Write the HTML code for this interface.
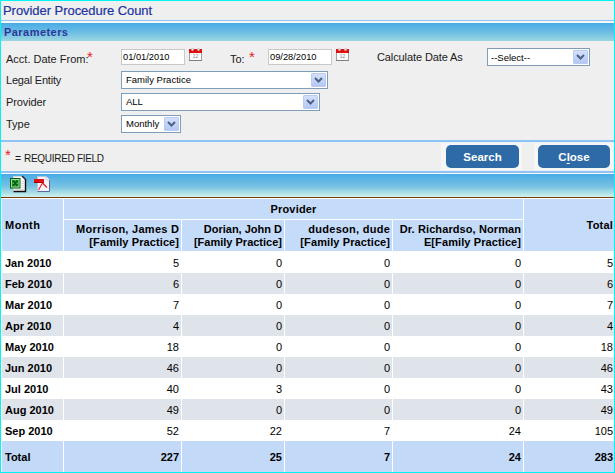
<!DOCTYPE html>
<html><head><meta charset="utf-8">
<style>
*{margin:0;padding:0;box-sizing:border-box}
html,body{width:615px;height:473px;overflow:hidden;background:#efefef;font-family:"Liberation Sans",sans-serif;color:#000}
.a{position:absolute}
.t{position:absolute;white-space:nowrap;line-height:1}
#frame{position:absolute;left:0;top:0;width:615px;height:473px;border:1px solid #00f4f4;z-index:50}
.grad{background:linear-gradient(#48ace6,#6cbde4 50%,#9ad6e0)}
.grad2{background:linear-gradient(#48ace6,#78c2e2 55%,#d0f3ea)}
.lbl{font-size:11px;color:#1a1a1a}
.inp{position:absolute;background:#fff;border:1px solid #c9c9c9}
.sel{position:absolute;background:#fff;border:1px solid #7f9db9}
.sel .btn{position:absolute;right:1px;top:1px;width:15px;height:14px;background:linear-gradient(#d4e0fb,#b4c8f4);border:1px solid #b9cbf0;border-radius:1px}
.sel .btn svg{position:absolute;left:2px;top:3px}
.itx{position:absolute;font-size:9px;line-height:1;color:#000;white-space:nowrap}
.cal{position:absolute;width:13px;height:13px}
.button{position:absolute;background:#2e6aa6;border-radius:5px;color:#fff;font-weight:bold;font-size:11.5px;text-align:center}
table{position:absolute;left:1px;top:198px;border-collapse:collapse;font-size:11px}
</style></head><body>
<div id="frame"></div>

<!-- title -->
<div class="t" style="left:3px;top:4px;font-size:13px;color:#1d34a0;-webkit-text-stroke:0.2px #1d34a0;letter-spacing:-0.05px">Provider Procedure Count</div>
<div class="a" style="left:0;top:20px;width:615px;height:1px;background:#8fc3f6"></div>
<div class="a" style="left:0;top:21px;width:615px;height:2px;background:#f6f8fa"></div>
<!-- params header -->
<div class="a grad" style="left:0;top:23px;width:615px;height:18px"></div>
<div class="t" style="left:4px;top:27px;font-size:11px;font-weight:bold;color:#2e3898;letter-spacing:0.45px">Parameters</div>

<!-- form -->
<div class="t lbl" style="left:6px;top:54px">Acct. Date From:</div>
<div class="t" style="left:87px;top:49px;font-size:15px;color:#e8201e">*</div>
<div class="inp" style="left:121px;top:49px;width:64px;height:16px"></div>
<div class="itx" style="left:123px;top:53px;font-size:9.3px">01/01/2010</div>
<svg class="cal" style="left:189px;top:48px" width="13" height="13" viewBox="0 0 13 13"><rect x="0.5" y="1.5" width="12" height="11" fill="#fafafa" stroke="#a0a0a0"/><rect x="0" y="12" width="13" height="1" fill="#808080"/><rect x="0" y="1" width="13" height="4" fill="#e40d0d"/><circle cx="3.5" cy="1.6" r="1.2" fill="#d8eef4" stroke="#a0a0a0" stroke-width="0.4"/><circle cx="9.5" cy="1.6" r="1.2" fill="#d8eef4" stroke="#a0a0a0" stroke-width="0.4"/><text x="6.5" y="10" font-size="5" text-anchor="middle" fill="#8a8a8a" font-family="Liberation Sans">12</text></svg>

<div class="t lbl" style="left:230px;top:54px">To:</div>
<div class="t" style="left:249px;top:49px;font-size:15px;color:#e8201e">*</div>
<div class="inp" style="left:268px;top:49px;width:64px;height:16px"></div>
<div class="itx" style="left:270px;top:53px;font-size:9.3px">09/28/2010</div>
<svg class="cal" style="left:336px;top:48px" width="13" height="13" viewBox="0 0 13 13"><rect x="0.5" y="1.5" width="12" height="11" fill="#fafafa" stroke="#a0a0a0"/><rect x="0" y="12" width="13" height="1" fill="#808080"/><rect x="0" y="1" width="13" height="4" fill="#e40d0d"/><circle cx="3.5" cy="1.6" r="1.2" fill="#d8eef4" stroke="#a0a0a0" stroke-width="0.4"/><circle cx="9.5" cy="1.6" r="1.2" fill="#d8eef4" stroke="#a0a0a0" stroke-width="0.4"/><text x="6.5" y="10" font-size="5" text-anchor="middle" fill="#8a8a8a" font-family="Liberation Sans">12</text></svg>

<div class="t lbl" style="left:377px;top:52px;letter-spacing:-0.1px">Calculate Date As</div>
<div class="sel" style="left:487px;top:48px;width:103px;height:18px"><div class="btn"><svg width="9" height="6" viewBox="0 0 9 6"><path d="M1 1 L4.5 4.5 L8 1" fill="none" stroke="#4d6185" stroke-width="2"/></svg></div></div>
<div class="itx" style="left:491px;top:53px;font-size:9.5px">--Select--</div>

<div class="t lbl" style="left:6px;top:75px;letter-spacing:-0.2px">Legal Entity</div>
<div class="sel" style="left:121px;top:71px;width:207px;height:18px"><div class="btn"><svg width="9" height="6" viewBox="0 0 9 6"><path d="M1 1 L4.5 4.5 L8 1" fill="none" stroke="#4d6185" stroke-width="2"/></svg></div></div>
<div class="itx" style="left:126px;top:75px;font-size:9.5px">Family Practice</div>

<div class="t lbl" style="left:6px;top:97px;letter-spacing:-0.1px">Provider</div>
<div class="sel" style="left:121px;top:93px;width:199px;height:18px"><div class="btn"><svg width="9" height="6" viewBox="0 0 9 6"><path d="M1 1 L4.5 4.5 L8 1" fill="none" stroke="#4d6185" stroke-width="2"/></svg></div></div>
<div class="itx" style="left:126px;top:97px;font-size:9.5px">ALL</div>

<div class="t lbl" style="left:6px;top:119px">Type</div>
<div class="sel" style="left:121px;top:115px;width:60px;height:18px"><div class="btn"><svg width="9" height="6" viewBox="0 0 9 6"><path d="M1 1 L4.5 4.5 L8 1" fill="none" stroke="#4d6185" stroke-width="2"/></svg></div></div>
<div class="itx" style="left:126px;top:119px;font-size:9.5px">Monthly</div>

<div class="a" style="left:0;top:140px;width:615px;height:2px;background:#8fc3f6"></div>
<!-- required row -->
<div class="t" style="left:5px;top:147px;font-size:15px;color:#e8201e">*</div>
<div class="t lbl" style="left:15px;top:153px;font-size:10.5px">=&nbsp;<span style="font-size:10px;letter-spacing:-0.3px">REQUIRED FIELD</span></div>
<div class="a" style="left:441px;top:143px;width:81px;height:27px;background:#f6f6f6"></div>
<div class="a" style="left:534px;top:143px;width:80px;height:27px;background:#f6f6f6"></div>
<div class="button" style="left:446px;top:145px;width:73px;height:23px;line-height:24px">Search</div>
<div class="button" style="left:538px;top:145px;width:72px;height:23px;line-height:24px">C<u style="text-underline-offset:1.5px">l</u>ose</div>
<div class="a" style="left:0;top:171px;width:615px;height:2px;background:#8fc3f6"></div>

<!-- toolbar -->
<div class="a" style="left:0;top:173px;width:615px;height:1px;background:#f4f8fb"></div>
<div class="a grad2" style="left:0;top:174px;width:615px;height:23px"></div>
<div class="a" style="left:0;top:197px;width:615px;height:1px;background:#7a3a10"></div>
<svg class="a" style="left:9px;top:175px" width="18" height="18" viewBox="0 0 18 18">
<path d="M4.5 1.5 H13.5 L16.5 4.5 V16.5 H4.5 Z" fill="#fbfbfb" stroke="#d8d8d8"/>
<path d="M16.5 4.5 V16.5 H4.5" fill="none" stroke="#0c0c0c" stroke-width="1.4"/>
<path d="M13 1 L17 5" stroke="#1a1a1a" stroke-width="1.2"/>
<path d="M12.5 6.5 H15 M12.5 8.5 H15 M12.5 10.5 H15 M12.5 12.5 H15 M6 14.5 H15" stroke="#d0d0d0" stroke-width="0.8"/>
<rect x="1.5" y="3.5" width="9.5" height="9.5" fill="#1a8a2a" stroke="#0a5a12"/>
<rect x="2.5" y="4.5" width="7.5" height="7.5" fill="none" stroke="#a6e6a6" stroke-width="0.9"/>
<path d="M4 6 L8.5 10.5 M8.5 6 L4 10.5" stroke="#075c10" stroke-width="1.7"/>
<path d="M3.6 8.2 L5 8.2 M7.6 8.2 L9 8.2 M6.2 5.2 L6.2 6 M6.2 10.6 L6.2 11.4" stroke="#8ed88e" stroke-width="0.8"/>
</svg>
<svg class="a" style="left:33px;top:175px" width="18" height="18" viewBox="0 0 18 18">
<path d="M4.5 1.5 H13 L16.5 5 V16.5 H4.5 Z" fill="#f6f4fa" stroke="#c0c4dc"/>
<path d="M16.5 5 V16.5 H4.5" fill="none" stroke="#5a68a8" stroke-width="1"/>
<path d="M13 1.5 V5 H16.5" fill="#ffffff" stroke="#a8b0d0" stroke-width="0.6"/>
<rect x="1" y="4" width="10" height="4" fill="#e01010"/>
<rect x="1" y="7" width="10" height="1" fill="#a00000"/>
<path d="M5.5 15 L9.5 8 L14 12.5" fill="none" stroke="#e42020" stroke-width="1.1"/>
</svg>

<!-- TABLE -->
<div class="a" style="left:0px;top:198px;width:615px;height:275px;background:#fff"></div>
<div class="a" style="left:2px;top:199px;width:61px;height:52px;background:#c4dbf9"></div>
<div class="a" style="left:64px;top:199px;width:459px;height:20px;background:#c4dbf9"></div>
<div class="a" style="left:64px;top:220px;width:117px;height:31px;background:#c4dbf9"></div>
<div class="a" style="left:182px;top:220px;width:102px;height:31px;background:#c4dbf9"></div>
<div class="a" style="left:285px;top:220px;width:107px;height:31px;background:#c4dbf9"></div>
<div class="a" style="left:393px;top:220px;width:130px;height:31px;background:#c4dbf9"></div>
<div class="a" style="left:524px;top:199px;width:90px;height:52px;background:#c4dbf9"></div>
<div class="t" style="top:220px;font-size:11px;font-weight:bold;left:5px;letter-spacing:0.5px;">Month</div>
<div class="t" style="top:204px;font-size:11px;font-weight:bold;left:64px;width:459px;text-align:center;letter-spacing:0.2px;">Provider</div>
<div class="t" style="left:64px;top:223px;width:115px;text-align:right;font-size:11px;font-weight:bold;line-height:13px"><span style="letter-spacing:0.28px;margin-right:-0.28px">Morrison, James D</span><br><span style="letter-spacing:0.1px;margin-right:-0.1px">[Family Practice]</span></div>
<div class="t" style="left:182px;top:223px;width:100px;text-align:right;font-size:11px;font-weight:bold;line-height:13px"><span style="letter-spacing:0px;margin-right:-0px">Dorian, John D</span><br><span style="letter-spacing:0px;margin-right:-0px">[Family Practice]</span></div>
<div class="t" style="left:285px;top:223px;width:105px;text-align:right;font-size:11px;font-weight:bold;line-height:13px"><span style="letter-spacing:0.3px;margin-right:-0.3px">dudeson, dude</span><br><span style="letter-spacing:0.1px;margin-right:-0.1px">[Family Practice]</span></div>
<div class="t" style="left:393px;top:223px;width:128px;text-align:right;font-size:11px;font-weight:bold;line-height:13px"><span style="letter-spacing:0.1px;margin-right:-0.1px">Dr. Richardso, Norman</span><br><span style="letter-spacing:0.1px;margin-right:-0.1px">E[Family Practice]</span></div>
<div class="t" style="top:220px;font-size:11px;font-weight:bold;left:524px;width:89px;text-align:right;letter-spacing:0.2px;">Total</div>
<div class="a" style="left:2px;top:252px;width:61px;height:21px;background:#ffffff"></div>
<div class="a" style="left:64px;top:252px;width:117px;height:21px;background:#ffffff"></div>
<div class="a" style="left:182px;top:252px;width:102px;height:21px;background:#ffffff"></div>
<div class="a" style="left:285px;top:252px;width:107px;height:21px;background:#ffffff"></div>
<div class="a" style="left:393px;top:252px;width:130px;height:21px;background:#ffffff"></div>
<div class="a" style="left:524px;top:252px;width:90px;height:21px;background:#ffffff"></div>
<div class="t" style="top:258px;font-size:11px;font-weight:bold;left:5px;">Jan 2010</div>
<div class="t" style="top:258px;font-size:11px;left:64px;width:115px;text-align:right;">5</div>
<div class="t" style="top:258px;font-size:11px;left:182px;width:100px;text-align:right;">0</div>
<div class="t" style="top:258px;font-size:11px;left:285px;width:105px;text-align:right;">0</div>
<div class="t" style="top:258px;font-size:11px;left:393px;width:128px;text-align:right;">0</div>
<div class="t" style="top:258px;font-size:11px;left:524px;width:89px;text-align:right;">5</div>
<div class="a" style="left:2px;top:273px;width:61px;height:21px;background:#dfe3ea"></div>
<div class="a" style="left:64px;top:273px;width:117px;height:21px;background:#dfe3ea"></div>
<div class="a" style="left:182px;top:273px;width:102px;height:21px;background:#dfe3ea"></div>
<div class="a" style="left:285px;top:273px;width:107px;height:21px;background:#dfe3ea"></div>
<div class="a" style="left:393px;top:273px;width:130px;height:21px;background:#dfe3ea"></div>
<div class="a" style="left:524px;top:273px;width:90px;height:21px;background:#dfe3ea"></div>
<div class="t" style="top:279px;font-size:11px;font-weight:bold;left:5px;">Feb 2010</div>
<div class="t" style="top:279px;font-size:11px;left:64px;width:115px;text-align:right;">6</div>
<div class="t" style="top:279px;font-size:11px;left:182px;width:100px;text-align:right;">0</div>
<div class="t" style="top:279px;font-size:11px;left:285px;width:105px;text-align:right;">0</div>
<div class="t" style="top:279px;font-size:11px;left:393px;width:128px;text-align:right;">0</div>
<div class="t" style="top:279px;font-size:11px;left:524px;width:89px;text-align:right;">6</div>
<div class="a" style="left:2px;top:294px;width:61px;height:21px;background:#ffffff"></div>
<div class="a" style="left:64px;top:294px;width:117px;height:21px;background:#ffffff"></div>
<div class="a" style="left:182px;top:294px;width:102px;height:21px;background:#ffffff"></div>
<div class="a" style="left:285px;top:294px;width:107px;height:21px;background:#ffffff"></div>
<div class="a" style="left:393px;top:294px;width:130px;height:21px;background:#ffffff"></div>
<div class="a" style="left:524px;top:294px;width:90px;height:21px;background:#ffffff"></div>
<div class="t" style="top:300px;font-size:11px;font-weight:bold;left:5px;">Mar 2010</div>
<div class="t" style="top:300px;font-size:11px;left:64px;width:115px;text-align:right;">7</div>
<div class="t" style="top:300px;font-size:11px;left:182px;width:100px;text-align:right;">0</div>
<div class="t" style="top:300px;font-size:11px;left:285px;width:105px;text-align:right;">0</div>
<div class="t" style="top:300px;font-size:11px;left:393px;width:128px;text-align:right;">0</div>
<div class="t" style="top:300px;font-size:11px;left:524px;width:89px;text-align:right;">7</div>
<div class="a" style="left:2px;top:315px;width:61px;height:21px;background:#dfe3ea"></div>
<div class="a" style="left:64px;top:315px;width:117px;height:21px;background:#dfe3ea"></div>
<div class="a" style="left:182px;top:315px;width:102px;height:21px;background:#dfe3ea"></div>
<div class="a" style="left:285px;top:315px;width:107px;height:21px;background:#dfe3ea"></div>
<div class="a" style="left:393px;top:315px;width:130px;height:21px;background:#dfe3ea"></div>
<div class="a" style="left:524px;top:315px;width:90px;height:21px;background:#dfe3ea"></div>
<div class="t" style="top:321px;font-size:11px;font-weight:bold;left:5px;">Apr 2010</div>
<div class="t" style="top:321px;font-size:11px;left:64px;width:115px;text-align:right;">4</div>
<div class="t" style="top:321px;font-size:11px;left:182px;width:100px;text-align:right;">0</div>
<div class="t" style="top:321px;font-size:11px;left:285px;width:105px;text-align:right;">0</div>
<div class="t" style="top:321px;font-size:11px;left:393px;width:128px;text-align:right;">0</div>
<div class="t" style="top:321px;font-size:11px;left:524px;width:89px;text-align:right;">4</div>
<div class="a" style="left:2px;top:336px;width:61px;height:21px;background:#ffffff"></div>
<div class="a" style="left:64px;top:336px;width:117px;height:21px;background:#ffffff"></div>
<div class="a" style="left:182px;top:336px;width:102px;height:21px;background:#ffffff"></div>
<div class="a" style="left:285px;top:336px;width:107px;height:21px;background:#ffffff"></div>
<div class="a" style="left:393px;top:336px;width:130px;height:21px;background:#ffffff"></div>
<div class="a" style="left:524px;top:336px;width:90px;height:21px;background:#ffffff"></div>
<div class="t" style="top:342px;font-size:11px;font-weight:bold;left:5px;">May 2010</div>
<div class="t" style="top:342px;font-size:11px;left:64px;width:115px;text-align:right;">18</div>
<div class="t" style="top:342px;font-size:11px;left:182px;width:100px;text-align:right;">0</div>
<div class="t" style="top:342px;font-size:11px;left:285px;width:105px;text-align:right;">0</div>
<div class="t" style="top:342px;font-size:11px;left:393px;width:128px;text-align:right;">0</div>
<div class="t" style="top:342px;font-size:11px;left:524px;width:89px;text-align:right;">18</div>
<div class="a" style="left:2px;top:357px;width:61px;height:21px;background:#dfe3ea"></div>
<div class="a" style="left:64px;top:357px;width:117px;height:21px;background:#dfe3ea"></div>
<div class="a" style="left:182px;top:357px;width:102px;height:21px;background:#dfe3ea"></div>
<div class="a" style="left:285px;top:357px;width:107px;height:21px;background:#dfe3ea"></div>
<div class="a" style="left:393px;top:357px;width:130px;height:21px;background:#dfe3ea"></div>
<div class="a" style="left:524px;top:357px;width:90px;height:21px;background:#dfe3ea"></div>
<div class="t" style="top:363px;font-size:11px;font-weight:bold;left:5px;">Jun 2010</div>
<div class="t" style="top:363px;font-size:11px;left:64px;width:115px;text-align:right;">46</div>
<div class="t" style="top:363px;font-size:11px;left:182px;width:100px;text-align:right;">0</div>
<div class="t" style="top:363px;font-size:11px;left:285px;width:105px;text-align:right;">0</div>
<div class="t" style="top:363px;font-size:11px;left:393px;width:128px;text-align:right;">0</div>
<div class="t" style="top:363px;font-size:11px;left:524px;width:89px;text-align:right;">46</div>
<div class="a" style="left:2px;top:378px;width:61px;height:21px;background:#ffffff"></div>
<div class="a" style="left:64px;top:378px;width:117px;height:21px;background:#ffffff"></div>
<div class="a" style="left:182px;top:378px;width:102px;height:21px;background:#ffffff"></div>
<div class="a" style="left:285px;top:378px;width:107px;height:21px;background:#ffffff"></div>
<div class="a" style="left:393px;top:378px;width:130px;height:21px;background:#ffffff"></div>
<div class="a" style="left:524px;top:378px;width:90px;height:21px;background:#ffffff"></div>
<div class="t" style="top:384px;font-size:11px;font-weight:bold;left:5px;">Jul 2010</div>
<div class="t" style="top:384px;font-size:11px;left:64px;width:115px;text-align:right;">40</div>
<div class="t" style="top:384px;font-size:11px;left:182px;width:100px;text-align:right;">3</div>
<div class="t" style="top:384px;font-size:11px;left:285px;width:105px;text-align:right;">0</div>
<div class="t" style="top:384px;font-size:11px;left:393px;width:128px;text-align:right;">0</div>
<div class="t" style="top:384px;font-size:11px;left:524px;width:89px;text-align:right;">43</div>
<div class="a" style="left:2px;top:399px;width:61px;height:21px;background:#dfe3ea"></div>
<div class="a" style="left:64px;top:399px;width:117px;height:21px;background:#dfe3ea"></div>
<div class="a" style="left:182px;top:399px;width:102px;height:21px;background:#dfe3ea"></div>
<div class="a" style="left:285px;top:399px;width:107px;height:21px;background:#dfe3ea"></div>
<div class="a" style="left:393px;top:399px;width:130px;height:21px;background:#dfe3ea"></div>
<div class="a" style="left:524px;top:399px;width:90px;height:21px;background:#dfe3ea"></div>
<div class="t" style="top:405px;font-size:11px;font-weight:bold;left:5px;">Aug 2010</div>
<div class="t" style="top:405px;font-size:11px;left:64px;width:115px;text-align:right;">49</div>
<div class="t" style="top:405px;font-size:11px;left:182px;width:100px;text-align:right;">0</div>
<div class="t" style="top:405px;font-size:11px;left:285px;width:105px;text-align:right;">0</div>
<div class="t" style="top:405px;font-size:11px;left:393px;width:128px;text-align:right;">0</div>
<div class="t" style="top:405px;font-size:11px;left:524px;width:89px;text-align:right;">49</div>
<div class="a" style="left:2px;top:420px;width:61px;height:21px;background:#ffffff"></div>
<div class="a" style="left:64px;top:420px;width:117px;height:21px;background:#ffffff"></div>
<div class="a" style="left:182px;top:420px;width:102px;height:21px;background:#ffffff"></div>
<div class="a" style="left:285px;top:420px;width:107px;height:21px;background:#ffffff"></div>
<div class="a" style="left:393px;top:420px;width:130px;height:21px;background:#ffffff"></div>
<div class="a" style="left:524px;top:420px;width:90px;height:21px;background:#ffffff"></div>
<div class="t" style="top:426px;font-size:11px;font-weight:bold;left:5px;">Sep 2010</div>
<div class="t" style="top:426px;font-size:11px;left:64px;width:115px;text-align:right;">52</div>
<div class="t" style="top:426px;font-size:11px;left:182px;width:100px;text-align:right;">22</div>
<div class="t" style="top:426px;font-size:11px;left:285px;width:105px;text-align:right;">7</div>
<div class="t" style="top:426px;font-size:11px;left:393px;width:128px;text-align:right;">24</div>
<div class="t" style="top:426px;font-size:11px;left:524px;width:89px;text-align:right;">105</div>
<div class="a" style="left:2px;top:441px;width:61px;height:31px;background:#c2d9f8"></div>
<div class="a" style="left:64px;top:441px;width:117px;height:31px;background:#c2d9f8"></div>
<div class="a" style="left:182px;top:441px;width:102px;height:31px;background:#c2d9f8"></div>
<div class="a" style="left:285px;top:441px;width:107px;height:31px;background:#c2d9f8"></div>
<div class="a" style="left:393px;top:441px;width:130px;height:31px;background:#c2d9f8"></div>
<div class="a" style="left:524px;top:441px;width:90px;height:31px;background:#c2d9f8"></div>
<div class="t" style="top:452px;font-size:11px;font-weight:bold;left:5px;">Total</div>
<div class="t" style="top:452px;font-size:11px;font-weight:bold;left:64px;width:115px;text-align:right;">227</div>
<div class="t" style="top:452px;font-size:11px;font-weight:bold;left:182px;width:100px;text-align:right;">25</div>
<div class="t" style="top:452px;font-size:11px;font-weight:bold;left:285px;width:105px;text-align:right;">7</div>
<div class="t" style="top:452px;font-size:11px;font-weight:bold;left:393px;width:128px;text-align:right;">24</div>
<div class="t" style="top:452px;font-size:11px;font-weight:bold;left:524px;width:89px;text-align:right;">283</div>
<!-- /TABLE -->
</body></html>
